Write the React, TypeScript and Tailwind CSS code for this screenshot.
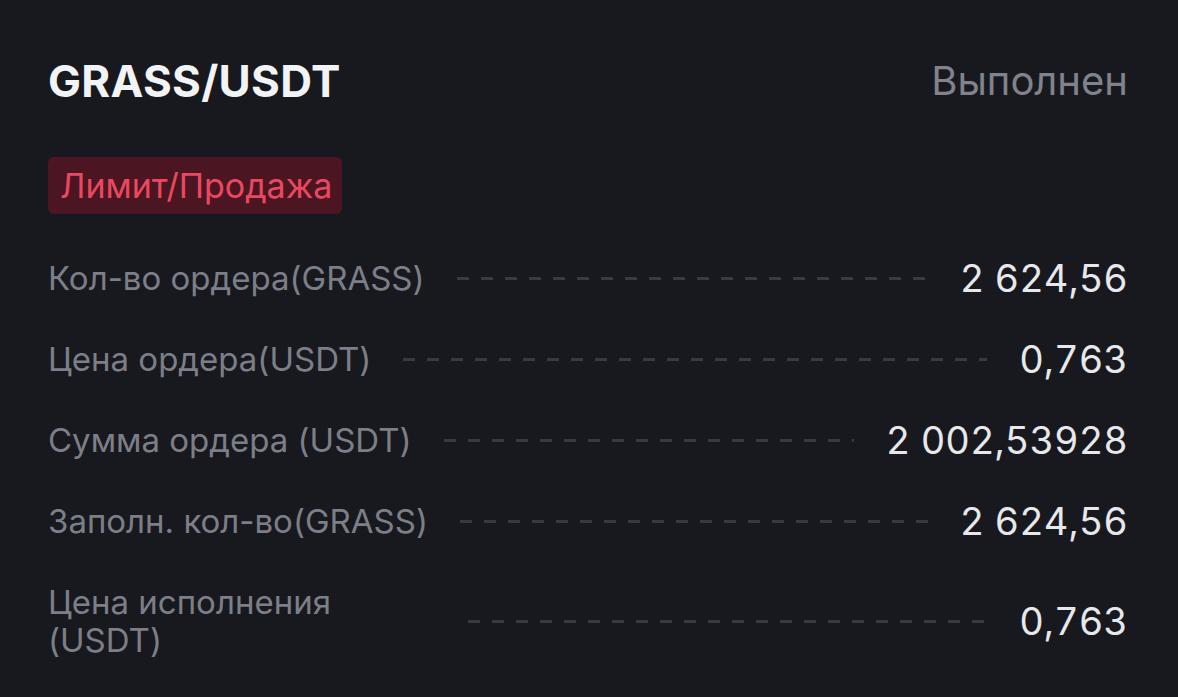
import React from "react";

const rows = [
  { label: "Кол-во ордера(GRASS)", value: "2 624,56" },
  { label: "Цена ордера(USDT)", value: "0,763" },
  { label: "Сумма ордера (USDT)", value: "2 002,53928" },
  { label: "Заполн. кол-во(GRASS)", value: "2 624,56" },
  { label: "Цена исполнения (USDT)", value: "0,763" },
];

export default function App() {
  return (
    <div className="w-[1178px] h-[697px] bg-[#18191e] pl-[48px] pr-[50px] pt-[57px] font-['Inter',sans-serif] overflow-hidden">
      <div className="flex items-center justify-between h-[48px]">
        <h1 className="text-[44px] font-bold text-[#f2f3f5] tracking-[0.3px] leading-none">GRASS/USDT</h1>
        <span className="text-[40px] text-[#80838c] leading-none">Выполнен</span>
      </div>

      <div className="mt-[52px] inline-flex items-center h-[57px] pl-[12px] pr-[10px] rounded-[6px] bg-[#4b1521]">
        <span className="text-[34px] text-[#ea4860] leading-none">Лимит/Продажа</span>
      </div>

      <div className="mt-[45px] flex flex-col gap-[43px]">
        {rows.map((r) => (
          <div key={r.label} className="flex items-center">
            <div className="max-w-[388px] text-[33px] leading-[38px] text-[#7c7f88]">{r.label}</div>
            <div className="grow mx-[32px] h-[3px] bg-[repeating-linear-gradient(90deg,#393a40_0,#393a40_12px,transparent_12px,transparent_24px)]" />
            <div className="text-[38px] leading-[38px] text-[#e7e8eb] tabular-nums">{r.value}</div>
          </div>
        ))}
      </div>
    </div>
  );
}
